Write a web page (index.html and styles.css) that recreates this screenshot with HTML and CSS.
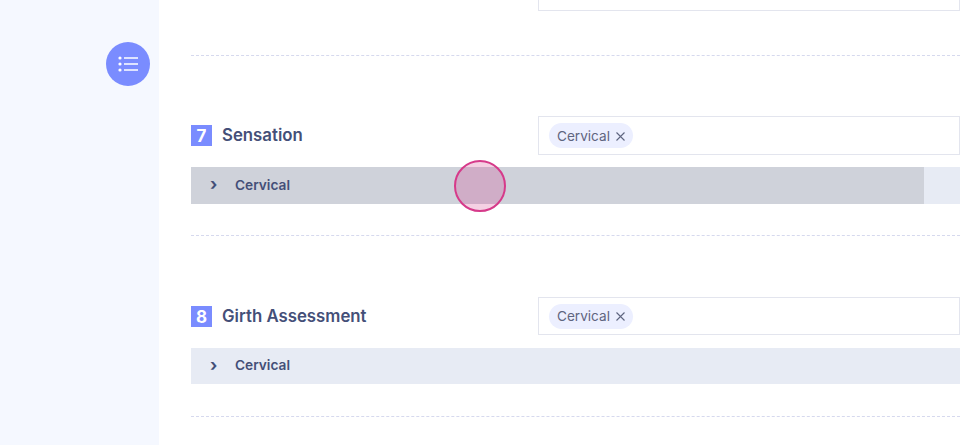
FILE: index.html
```html
<!DOCTYPE html>
<html lang="en">
<head>
  <meta charset="UTF-8" />
  <title>Assessment</title>
  <link rel="stylesheet" href="styles.css">
</head>
<body>
  <div class="page">
    <aside class="sidebar">
      <button class="list-btn">
        <svg width="22" height="22" viewBox="0 0 22 22" fill="none" stroke="#fff" stroke-width="1.7">
          <path d="M7 5h14M7 11h14M7 17h14" />
          <circle cx="3" cy="5" r="1.6" fill="#fff" stroke="none" />
          <circle cx="3" cy="11" r="1.6" fill="#fff" stroke="none" />
          <circle cx="3" cy="17" r="1.6" fill="#fff" stroke="none" />
        </svg>
      </button>
    </aside>

    <main class="content">
      <section class="top-stub">
        <div class="stub-input"></div>
      </section>

      <section class="block">
        <div class="block-head">
          <div class="block-title"><span class="num">7</span><h2>Sensation</h2></div>
          <div class="tag-input">
            <span class="tag">Cervical
              <svg class="tag-x" width="9" height="9" viewBox="0 0 9 9" stroke="#5f6580" stroke-width="1.1"><path d="M.5.5l8 8M8.5.5l-8 8" /></svg>
            </span>
          </div>
        </div>
        <div class="accordion">
          <div class="press"></div>
          <span class="chevron">&rsaquo;</span>
          <span class="acc-label">Cervical</span>
        </div>
      </section>

      <section class="block">
        <div class="block-head">
          <div class="block-title"><span class="num">8</span><h2>Girth Assessment</h2></div>
          <div class="tag-input">
            <span class="tag">Cervical
              <svg class="tag-x" width="9" height="9" viewBox="0 0 9 9" stroke="#5f6580" stroke-width="1.1"><path d="M.5.5l8 8M8.5.5l-8 8" /></svg>
            </span>
          </div>
        </div>
        <div class="accordion">
          <span class="chevron">&rsaquo;</span>
          <span class="acc-label">Cervical</span>
        </div>
      </section>
    </main>
  </div>

  <div class="touch"></div>
</body>
</html>
```

FILE: styles.css
```css
* { margin:0; padding:0; box-sizing:border-box; font-family:'Inter','Open Sans',sans-serif; }
html, body { height:100%; overflow:hidden; background:#fff; }

.page { display:flex; height:445px; }

/* Left rail */
.sidebar { width:159px; flex-shrink:0; background:#f5f8ff; display:flex; justify-content:flex-end; align-items:flex-start; padding:42px 9px 0 0; }
.list-btn { width:44px; height:44px; border:none; border-radius:50%; background:#7a8cff; display:flex; align-items:center; justify-content:center; }

/* Sections */
.content { flex:1; min-width:0; padding-left:32px; }
.top-stub { height:56px; border-bottom:1px dashed #d6d9ee; padding-left:347px; }
.stub-input { height:11px; border:1px solid #e3e5ee; border-top:none; }

.block { padding-top:60px; padding-bottom:31px; border-bottom:1px dashed #d6d9ee; }
.block + .block { padding-top:61px; padding-bottom:32px; }

.block-head { display:flex; align-items:center; margin-bottom:12px; }
.block + .block .block-head { margin-bottom:13px; }
.block-title { width:347px; flex-shrink:0; display:flex; align-items:center; gap:10px; }
.block-title h2 { font-size:16.8px; font-weight:600; color:#444f78; padding-bottom:2px; }
.block + .block .block-title h2 { padding-bottom:0; }
.num { width:21px; height:21px; padding-top:1px; background:#7a8cff; color:#fff; font-size:17px; font-weight:700; display:flex; align-items:center; justify-content:center; }

.tag-input { flex:1; height:39px; border:1px solid #e3e5ee; display:flex; align-items:center; padding-left:10px; }
.block + .block .tag-input { height:38px; }
.tag { height:25px; padding:0 8px; border-radius:13px; background:#ecefff; color:#5f6580; font-size:13.6px; display:flex; align-items:center; gap:6px; }
.tag-x { margin-top:1px; }

.accordion { position:relative; height:37px; background:#e7ebf4; display:flex; align-items:center; padding-left:19px; padding-bottom:2px; }
.block + .block .accordion { height:36px; }
.press { position:absolute; left:0; top:0; bottom:0; width:733px; background:#cfd2da; }
.chevron { position:relative; width:25px; font-size:17px; font-weight:700; color:#444f78; line-height:1; }
.acc-label { position:relative; font-size:13.7px; font-weight:600; color:#444f78; }

/* Touch marker over the page */
.touch { position:absolute; left:454px; top:160px; width:52px; height:52px; border:2px solid #d63a8a; border-radius:50%; background:rgba(214,58,138,.24); }
```
